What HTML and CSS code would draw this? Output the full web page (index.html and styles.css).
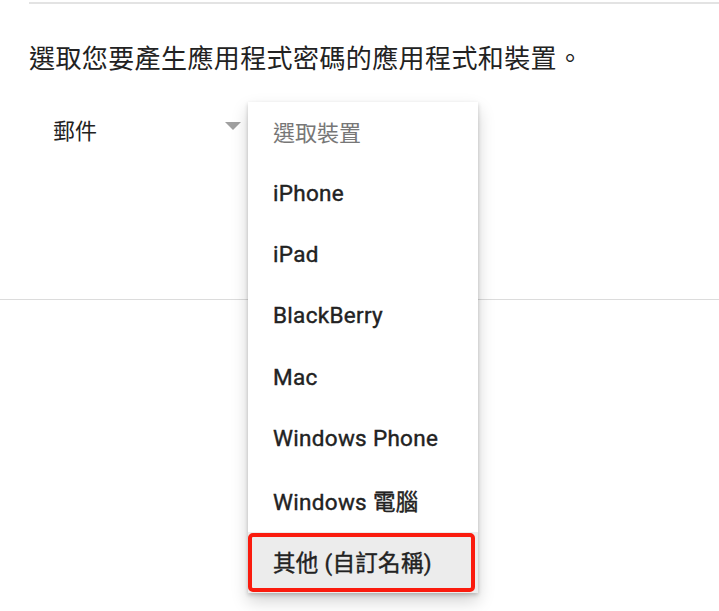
FILE: index.html
```html
<!DOCTYPE html>
<html lang="zh-Hant">
<head>
    <meta charset="UTF-8">
    <meta name="viewport" content="width=device-width, initial-scale=1.0">
    <title>應用程式密碼</title>
    <link rel="stylesheet" href="styles.css">
</head>
<body>
    <div class="top-rule"></div>

    <div class="panel">
        <p class="intro">選取您要產生應用程式密碼的應用程式和裝置。</p>

        <div class="selectors">
            <div class="select app-select">
                <span class="select-value">郵件</span>
                <span class="select-arrow"></span>
            </div>

            <ul class="menu">
                <li class="menu-item placeholder">選取裝置</li>
                <li class="menu-item">iPhone</li>
                <li class="menu-item">iPad</li>
                <li class="menu-item">BlackBerry</li>
                <li class="menu-item">Mac</li>
                <li class="menu-item">Windows Phone</li>
                <li class="menu-item">Windows 電腦</li>
                <li class="menu-item active">其他 (自訂名稱)</li>
            </ul>
        </div>
    </div>

    <div class="bottom-rule"></div>
</body>
</html>
```

FILE: styles.css
```css
html, body {
    min-height: 100%;
}
body {
    margin: 0;
    min-height: 611px;
    font-family: Roboto, "Noto Sans CJK TC", sans-serif;
    color: #222;
    background: #fff;
}
.top-rule {
    height: 2px;
    margin: 2px 0 0 29px;
    background-color: #e3e3e3;
}
.panel {
    position: relative;
    padding: 0 0 0 29px;
    height: 295px;
}
.intro {
    margin: 0;
    padding-top: 37px;
    font-size: 26px;
    line-height: 36px;
    color: #222;
    letter-spacing: 0.4px;
}
.selectors {
    display: flex;
    margin-top: 22px;
}
.select {
    display: flex;
    align-items: center;
    width: 212px;
    height: 60px;
}
.select-value {
    flex: 1;
    padding-left: 24px;
    font-size: 22px;
    color: #222;
}
.select-arrow {
    width: 0;
    height: 0;
    border-left: 8px solid transparent;
    border-right: 8px solid transparent;
    border-top: 8px solid #a0a0a0;
    margin-top: -6px;
}
.menu {
    position: absolute;
    top: 98px;
    left: 248px;
    width: 230px;
    margin: 0;
    padding: 0;
    list-style: none;
    background: #fff;
    box-shadow: 0 2px 4px rgba(0, 0, 0, 0.2), 0 8px 16px rgba(0, 0, 0, 0.18);
    z-index: 2;
}
.menu-item {
    box-sizing: border-box;
    height: 61.4px;
    display: flex;
    align-items: center;
    padding: 0 0 3px 25px;
    font-size: 22.5px;
    font-weight: 400;
    letter-spacing: 0.3px;
    -webkit-text-stroke: 0.4px #222;
    color: #222;
}
.menu-item.placeholder {
    -webkit-text-stroke: 0;
    letter-spacing: 0;
    font-size: 22px;
    color: #777;
}
.menu-item.active {
    position: relative;
    background-color: #ececec;
}
.menu-item.active::after {
    content: "";
    position: absolute;
    left: 0;
    top: 1px;
    right: 3px;
    bottom: 1px;
    border: 4px solid #fa1b0e;
    border-radius: 5px;
}
.bottom-rule {
    height: 1px;
    background-color: #dcdcdc;
}
```
